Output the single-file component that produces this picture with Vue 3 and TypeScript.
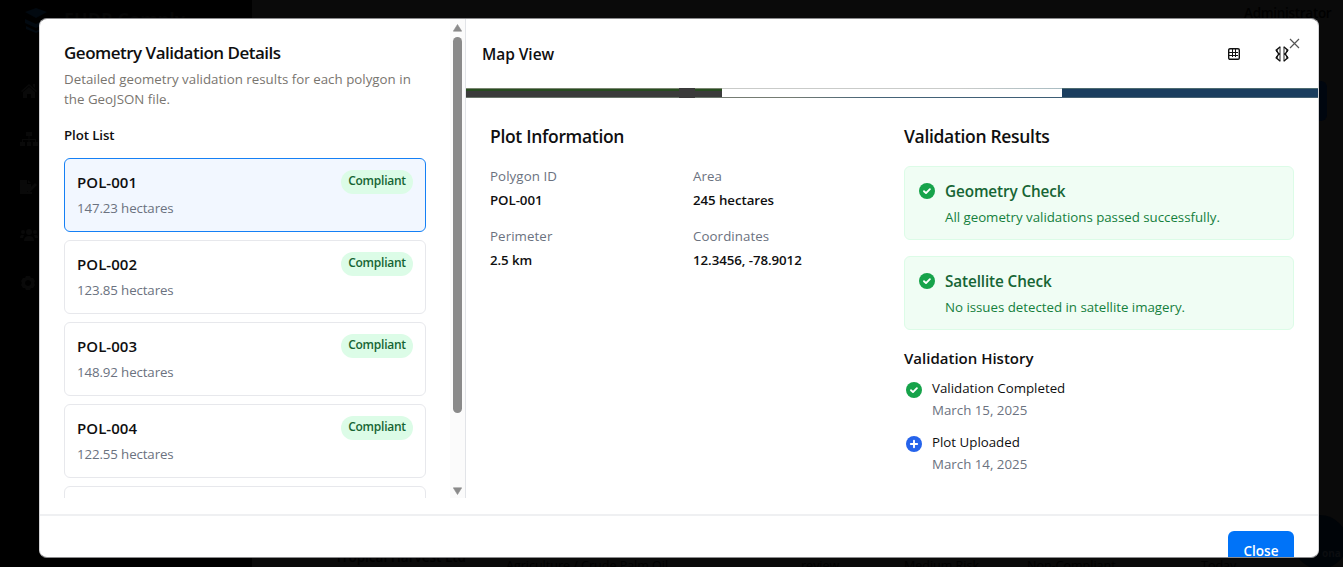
<script setup lang="ts">
interface Plot { id: string; area: string }
interface Fact { label: string; value: string }
interface Check { title: string; text: string }
interface Entry { title: string; date: string; kind: 'done' | 'add' }

const plots: Plot[] = [
  { id: 'POL-001', area: '147.23 hectares' },
  { id: 'POL-002', area: '123.85 hectares' },
  { id: 'POL-003', area: '148.92 hectares' },
  { id: 'POL-004', area: '122.55 hectares' },
]
const facts: Fact[] = [
  { label: 'Polygon ID', value: 'POL-001' },
  { label: 'Area', value: '245 hectares' },
  { label: 'Perimeter', value: '2.5 km' },
  { label: 'Coordinates', value: '12.3456, -78.9012' },
]
const checks: Check[] = [
  { title: 'Geometry Check', text: 'All geometry validations passed successfully.' },
  { title: 'Satellite Check', text: 'No issues detected in satellite imagery.' },
]
const history: Entry[] = [
  { title: 'Validation Completed', date: 'March 15, 2025', kind: 'done' },
  { title: 'Plot Uploaded', date: 'March 14, 2025', kind: 'add' },
]
</script>

<template>
  <div class="page">
    <div class="backdrop">
      <div class="side">
        <div class="brand">
          <svg width="26" height="26" viewBox="0 0 26 26"><path d="M2 5l11-4 11 4-11 6zM2 12l11 5 11-5v4l-11 5-11-5zM3 19l10 5 10-5v3l-10 4-10-4z" fill="#020910" /></svg>
          <span>EUDR Comply</span>
        </div>
        <div class="nav">
          <svg width="18" height="16" viewBox="0 0 18 16"><path d="M9 1l8 7-1 1-7-6-7 6-1-1zM3 9l6-5 6 5v6h-4v-4H7v4H3zM13 1h2v4l-2-2z" /></svg>
          <svg width="18" height="16" viewBox="0 0 18 16"><path d="M6 1h6v4H9.500v3H16v3h2v4h-5v-4h2V9H9.500v2H11v4H7v-4h1.500V9H3v2h2v4H0v-4h2V8h6.500V5H6z" /></svg>
          <svg width="18" height="16" viewBox="0 0 18 16"><path d="M0 1h7v4h4v3l-4 5h5v2H0zM8 1l3 3H8zM15 4l2 2-7 7H8v-2z" /></svg>
          <svg width="18" height="16" viewBox="0 0 18 16"><circle cx="9" cy="5" r="3" /><circle cx="3" cy="5" r="2" /><circle cx="15" cy="5" r="2" /><path d="M4 14q0-5 5-5t5 5zM0 11q0-4 4-3l-1 3zM18 11q0-4-4-3l1 3z" /></svg>
          <svg width="18" height="16" viewBox="0 0 18 16"><path fill-rule="evenodd" d="M6 1h4l1 2 2 0 2 3-1 2 1 2-2 3-2 0-1 2H6l-1-2-2 0-2-3 1-2-1-2 2-3 2 0zM8 5a3 3 0 1 0 .1 0z" /></svg>
        </div>
      </div>
      <div class="behind">
        <div class="admin">Administrator</div>
        <div class="bluebox"></div>
        <div class="bubble">ona</div>
        <div class="rowtext">
          <span class="r1">Tropical Harvest Ltd</span>
          <span class="r2">Agriculture / Crude Palm Oil</span>
          <span class="r3">review</span>
          <span class="r4">Medium Risk</span>
          <span class="r5">Non-Compliant</span>
          <span class="r6">Today</span>
        </div>
      </div>
    </div>

    <section class="modal">
      <div class="content">
        <aside class="left">
          <div class="list">
            <h2>Geometry Validation Details</h2>
            <p class="desc">Detailed geometry validation results for each polygon in<br />the GeoJSON file.</p>
            <h3>Plot List</h3>
            <div v-for="(p, i) in plots" :key="p.id" class="card" :class="{ active: i === 0 }">
              <div>
                <div class="pid">{{ p.id }}</div>
                <div class="area">{{ p.area }}</div>
              </div>
              <span class="badge">Compliant</span>
            </div>
            <div class="card"></div>
          </div>
          <div class="track">
            <svg width="9" height="8" viewBox="0 0 9 8"><path d="M4.500 .5L8.700 7.200H.3z" fill="#8b8b8b" stroke="#8b8b8b" stroke-width=".6" stroke-linejoin="round" /></svg>
            <i class="thumb"></i>
            <svg width="9" height="8" viewBox="0 0 9 8"><path d="M4.500 7.500L8.700 .8H.3z" fill="#8b8b8b" stroke="#8b8b8b" stroke-width=".6" stroke-linejoin="round" /></svg>
          </div>
        </aside>

        <main class="right">
          <header>
            <span class="mapview">Map View</span>
            <svg width="12" height="12" viewBox="0 0 12 12" fill="none" stroke="#111"><rect x=".7" y=".7" width="10.600" height="10.600" rx="1.300" stroke-width="1.400" /><path d="M4.500 1v8M7.500 1v8M1 4.500h9M1 7.500h9" stroke-width="1" /></svg>
            <svg class="mirror" width="14" height="16" viewBox="0 0 14 16" fill="none"><path d="M5 .5v15M9 .5v15" stroke="#555" stroke-width="1.300" /><path d="M5 1L1.200 4.200 3.800 8 1.200 11.800 5 15M9 1l3.800 3.200L10.200 8l2.600 3.800L9 15" stroke="#111" stroke-width="1.400" /><path d="M1.200 5h1.600M1.200 11h1.600M11.200 5h1.600M11.200 11h1.600M3.800 8H5M9 8h1.200" stroke="#111" stroke-width="1.500" /></svg>
          </header>
          <div class="map"><i class="dark"></i><i class="pale"></i><i class="sea"></i></div>
          <div class="cols">
            <section class="info">
              <h2>Plot Information</h2>
              <div class="facts">
                <div v-for="f in facts" :key="f.label">
                  <div class="lab">{{ f.label }}</div>
                  <div class="val">{{ f.value }}</div>
                </div>
              </div>
            </section>
            <section class="results">
              <h2>Validation Results</h2>
              <div v-for="c in checks" :key="c.title" class="check">
                <svg width="16" height="16" viewBox="0 0 16 16"><circle cx="8" cy="8" r="8" fill="#16a34a" /><path d="M5 8.200L7 10.100l3.900-3.900" fill="none" stroke="#fff" stroke-width="1.900" stroke-linecap="round" stroke-linejoin="round" /></svg>
                <div>
                  <div class="ct">{{ c.title }}</div>
                  <div class="cd">{{ c.text }}</div>
                </div>
              </div>
              <h4>Validation History</h4>
              <div v-for="h in history" :key="h.title" class="entry">
                <svg width="16" height="16" viewBox="0 0 16 16">
                  <circle cx="8" cy="8" r="8" :fill="h.kind === 'done' ? '#16a34a' : '#2563eb'" />
                  <path :d="h.kind === 'done' ? 'M5 8.200L7 10.100l3.900-3.900' : 'M8 4.800v6.400M4.800 8h6.400'" fill="none" stroke="#fff" stroke-width="1.900" stroke-linecap="round" stroke-linejoin="round" />
                </svg>
                <div>
                  <div class="et">{{ h.title }}</div>
                  <div class="ed">{{ h.date }}</div>
                </div>
              </div>
            </section>
          </div>
        </main>
      </div>
      <footer><button>Close</button></footer>
      <svg class="x" width="11" height="11" viewBox="0 0 11 11"><path d="M1 1l9 9M10 1l-9 9" stroke="#555" stroke-width="1.200" /></svg>
    </section>
  </div>
</template>

<style>
body { overflow: hidden; background: #000; }
</style>
<style scoped>
* { box-sizing: border-box; }
h2, h3, h4, p { margin: 0; font-weight: 600; }
svg { display: block; flex: none; }
.page { position: relative; width: 1343px; height: 567px; overflow: hidden; background: #000; font-family: "Open Sans", "Noto Sans", sans-serif; font-size: 13.5px; color: #0f0f10; white-space: nowrap; }
.backdrop { position: absolute; inset: 0; display: flex; }
.side { width: 252px; background: #000; position: relative; }
.brand { position: absolute; left: 23px; top: 7px; display: flex; gap: 15px; color: #060606; font-size: 18px; font-weight: 700; line-height: 24px; }
.nav { position: absolute; left: 20px; top: 83px; display: flex; flex-direction: column; gap: 32px; fill: #090909; }
.behind { flex: 1; background: #0a0a0a; position: relative; }
.admin { position: absolute; left: 992px; top: 4px; font-size: 13.5px; line-height: 18px; color: #000; font-weight: 600; letter-spacing: -.3px; }
.bluebox { position: absolute; right: 16px; top: 81px; width: 60px; height: 40px; border-radius: 6px; background: #00060f; }
.bubble { position: absolute; right: -4px; top: 515px; width: 54px; height: 54px; border-radius: 50%; background: #000408; color: #0b0d10; font-size: 10px; font-weight: 700; padding: 31px 0 0 29px; }
.rowtext { font-size: 12.5px; line-height: 18px; color: #010101; }
.rowtext span { position: absolute; top: 557px; }
.rowtext .r1 { left: 83px; top: 548px; font-size: 13.5px; font-weight: 600; }
.rowtext .r2 { left: 254px; }
.rowtext .r3 { left: 549px; }
.rowtext .r4 { left: 652px; }
.rowtext .r5 { left: 775px; }
.rowtext .r6 { left: 949px; }
.modal { position: absolute; left: 39px; top: 18px; width: 1280px; height: 540px; border: 1px solid #d4d4d6; border-top-color: #8b8b8d; border-bottom-color: #8b8b8d; border-radius: 8px; background: #fff; overflow: hidden; display: flex; flex-direction: column; }
.content { display: flex; height: 479px; flex: none; }
.left { width: 426px; border-right: 1px solid #e2e4e8; display: flex; }
.list { width: 410px; padding: 21.5px 24px 0; overflow: hidden; height: 479px; }
.list h2 { font-size: 17px; line-height: 24px; letter-spacing: -.5px; }
.desc { margin-top: 4px; font-size: 13.3px; font-weight: 400; line-height: 20px; color: #79756f; letter-spacing: .02px; }
.list h3 { font-size: 13.3px; line-height: 20px; margin: 16px 0 13px; letter-spacing: -.1px; }
.card { height: 74px; border: 1px solid #e7e8ec; border-radius: 6px; padding: 11.5px 12px; margin-bottom: 8px; display: flex; justify-content: space-between; align-items: flex-start; }
.card.active { border-color: #1580f5; background: #f2f7ff; }
.pid { font-size: 15px; line-height: 24px; font-weight: 600; letter-spacing: .05px; }
.area { margin-top: 4px; font-size: 13.3px; line-height: 20px; color: #6b7280; letter-spacing: -.12px; }
.badge { width: 72px; height: 24px; border-radius: 12px; background: #dcfce7; color: #166534; font-size: 12px; line-height: 22px; font-weight: 600; text-align: center; letter-spacing: -.25px; }
.track { width: 15px; background: #fbfbfb; display: flex; flex-direction: column; align-items: center; padding: 5px 0 3px; height: 479px; }
.thumb { width: 9px; height: 376px; border-radius: 5px; background: #8a8a8a; margin: 5px 0 auto; }
.right { flex: 1; min-width: 0; }
header { height: 69px; display: flex; align-items: center; padding-left: 16px; }
.mapview { font-size: 15.5px; font-weight: 600; width: 746px; letter-spacing: -.05px; }
.mirror { margin-left: 35px; }
.map { height: 10px; display: flex; }
.map i { height: 10px; }
.dark { width: 256px; background: linear-gradient(90deg, transparent 213px, #3b3b3b 213px 229px, transparent 229px), linear-gradient(#78856f 1px, #284c20 1px 3px, #3b3b3b 3px 9px, #6b756b 9px); }
.pale { width: 340px; background: linear-gradient(90deg, #c9cbc9 70%, #a9bcc2) 0 0 / 100% 1px no-repeat, linear-gradient(90deg, #757c73 20%, #466478 45%, #3d5d75) 0 8.500px / 100% 1.500px no-repeat, #fff; }
.sea { flex: 1; background: linear-gradient(#4d6a70 1px, #1b3e5f 1px 9px, #466172 9px); }
.cols { display: flex; padding: 26px 24px 0; gap: 24px; }
.cols h2 { font-size: 17.5px; line-height: 24px; letter-spacing: -.32px; }
.info { width: 390px; }
.facts { display: grid; grid-template-columns: 187px 187px; column-gap: 16px; row-gap: 16px; margin-top: 18px; }
.lab { font-size: 13.3px; line-height: 20px; color: #6b7280; letter-spacing: .08px; }
.val { font-size: 13.3px; line-height: 20px; font-weight: 600; margin-top: 4px; letter-spacing: -.07px; }
.results { width: 390px; }
.check { height: 74px; margin-top: 16px; border: 1px solid #dcfce7; border-radius: 6px; background: #f0fdf4; padding: 12px 14px; display: flex; gap: 10px; color: #166534; }
.results h2 + .check { margin-top: 18.400px; }
.check svg { margin-top: 4px; }
.ct { font-size: 15.3px; line-height: 24px; font-weight: 600; letter-spacing: -.12px; }
.cd { margin-top: 4px; font-size: 13.3px; line-height: 20px; color: #15803d; letter-spacing: -.02px; }
h4 { margin-top: 15.600px; font-size: 15px; line-height: 24px; }
.entry { display: flex; gap: 10px; padding-left: 2px; margin-top: 8px; height: 46px; }
.entry svg { margin-top: 4.500px; }
.et { font-size: 13.3px; line-height: 20px; }
.ed { font-size: 13.3px; line-height: 20px; color: #6b7280; margin-top: 2px; }
footer { flex: 1; margin-top: 16px; border-top: 2px solid #eff0f2; padding: 15px 24px 0; display: flex; justify-content: flex-end; }
button { width: 66px; height: 40px; border: 0; border-radius: 6px; background: #0073f8; color: #fff; font: 600 13.5px/40px "Open Sans", sans-serif; padding: 0; }
.x { position: absolute; right: 18.500px; top: 19px; }
</style>
